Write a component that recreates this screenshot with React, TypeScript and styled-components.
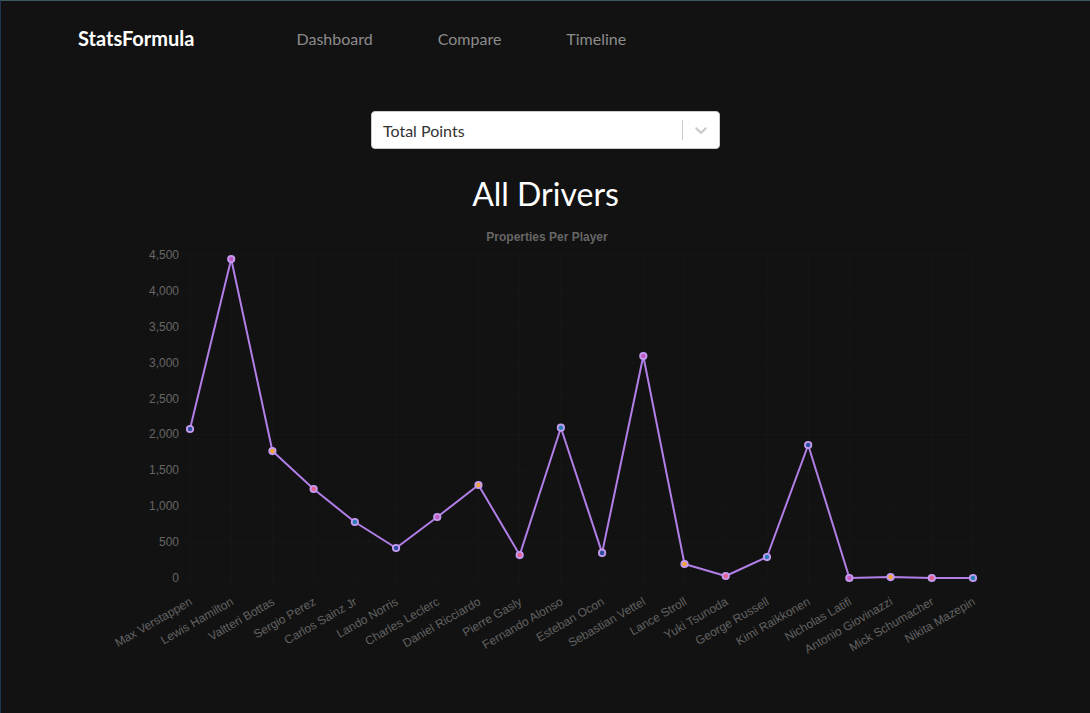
import styled, { createGlobalStyle } from 'styled-components';

type Driver = { name: string; points: number };

const drivers: Driver[] = [
  { name: 'Max Verstappen', points: 2076 },
  { name: 'Lewis Hamilton', points: 4444 },
  { name: 'Valtteri Bottas', points: 1769 },
  { name: 'Sergio Perez', points: 1240 },
  { name: 'Carlos Sainz Jr', points: 780 },
  { name: 'Lando Norris', points: 418 },
  { name: 'Charles Leclerc', points: 850 },
  { name: 'Daniel Ricciardo', points: 1296 },
  { name: 'Pierre Gasly', points: 320 },
  { name: 'Fernando Alonso', points: 2094 },
  { name: 'Esteban Ocon', points: 350 },
  { name: 'Sebastian Vettel', points: 3093 },
  { name: 'Lance Stroll', points: 195 },
  { name: 'Yuki Tsunoda', points: 28 },
  { name: 'George Russell', points: 292 },
  { name: 'Kimi Raikkonen', points: 1853 },
  { name: 'Nicholas Latifi', points: 0 },
  { name: 'Antonio Giovinazzi', points: 13 },
  { name: 'Mick Schumacher', points: 0 },
  { name: 'Nikita Mazepin', points: 0 },
];

const pointColors = ['#2d4f9e', '#c25cc4', '#f2a33a', '#e6618f', '#2a7fb8'];

// chart geometry (svg coords, svg sits at page x=95, y=225)
const LEFT = 94;
const RIGHT = 877;
const TOP = 30;
const BOTTOM = 353;
const MAX = 4500;
const step = (RIGHT - LEFT) / (drivers.length - 1);
const xAt = (i: number) => LEFT + i * step;
const yAt = (v: number) => BOTTOM - (v / MAX) * (BOTTOM - TOP);
const ticks = [0, 500, 1000, 1500, 2000, 2500, 3000, 3500, 4000, 4500];

const GlobalStyle = createGlobalStyle`
  html, body {
    margin: 0;
    padding: 0;
    background: #121212;
  }
  body {
    font-family: "Trebuchet MS", Lato, "DejaVu Sans", sans-serif;
  }
`;

const Page = styled.div`
  min-height: 713px;
  box-sizing: border-box;
  border-top: 1px solid #3d5b5e;
  border-left: 1px solid #1f3550;
  background: #121212;
`;

const Header = styled.header`
  display: flex;
  align-items: center;
  height: 74px;
  padding-left: 77px;
`;

const Brand = styled.h1`
  margin: 0 102px 0 0;
  font-size: 20px;
  font-weight: 700;
  color: #fff;
`;

const Nav = styled.nav`
  display: flex;
  gap: 65px;
`;

const NavItem = styled.a`
  font-size: 16px;
  color: #8c8c8c;
  text-decoration: none;
`;

const Main = styled.main`
  display: flex;
  flex-direction: column;
  align-items: center;
  padding-top: 36px;
`;

const Select = styled.div`
  box-sizing: border-box;
  width: 349px;
  height: 38px;
  display: flex;
  align-items: center;
  background: #fff;
  border: 1px solid #ccc;
  border-radius: 4px;
`;

const SelectValue = styled.span`
  flex: 1;
  padding-left: 11px;
  font-size: 16px;
  color: #333;
`;

const Separator = styled.span`
  align-self: stretch;
  width: 1px;
  margin: 8px 0;
  background: #ccc;
`;

const Indicator = styled.span`
  display: flex;
  padding: 8px;
  color: #ccc;
`;

const Title = styled.h2`
  margin: 26px 0 0;
  font-size: 32px;
  font-weight: 400;
  color: #fff;
  line-height: 38px;
`;

const ChartBox = styled.div`
  width: 900px;
  margin-top: 12px;
`;

const ChartSvg = styled.svg`
  display: block;
  font-family: "Liberation Sans", Arial, sans-serif;
`;

function Chevron() {
  return (
    <svg width="20" height="20" viewBox="0 0 20 20" fill="currentColor">
      <path d="M4.516 7.548c0.436-0.446 1.043-0.481 1.576 0l3.908 3.747 3.908-3.747c0.533-0.481 1.141-0.446 1.574 0 0.436 0.445 0.408 1.197 0 1.615-0.406 0.418-4.695 4.502-4.695 4.502-0.217 0.223-0.502 0.335-0.787 0.335s-0.57-0.112-0.789-0.335c0 0-4.287-4.084-4.695-4.502s-0.436-1.17 0-1.615z" />
    </svg>
  );
}

function LineChart() {
  const line = drivers
    .map((d, i) => `${i === 0 ? 'M' : 'L'}${xAt(i).toFixed(1)},${yAt(d.points).toFixed(1)}`)
    .join(' ');

  return (
    <ChartSvg width={900} height={430}>
      <text x={451} y={16} textAnchor="middle" fontSize={12} fontWeight={700} fill="#666">
        Properties Per Player
      </text>
      {ticks.map((t) => (
        <g key={t}>
          <line x1={LEFT - 6} x2={RIGHT} y1={yAt(t)} y2={yAt(t)} stroke="#171717" strokeWidth={1} />
          <text x={LEFT - 11} y={yAt(t) + 4} textAnchor="end" fontSize={12} fill="#666">
            {t.toLocaleString('en-US')}
          </text>
        </g>
      ))}
      {drivers.map((d, i) => (
        <line key={d.name} x1={xAt(i)} x2={xAt(i)} y1={TOP} y2={BOTTOM + 6} stroke="#171717" strokeWidth={1} />
      ))}
      <path d={line} fill="none" stroke="#b27ee8" strokeWidth={2} strokeLinejoin="round" />
      {drivers.map((d, i) => (
        <circle
          key={d.name}
          cx={xAt(i)}
          cy={yAt(d.points)}
          r={3.2}
          fill={pointColors[i % pointColors.length]}
          stroke="#c39bf0"
          strokeWidth={1.8}
        />
      ))}
      {drivers.map((d, i) => {
        const ax = xAt(i) + 3;
        const ay = 379;
        return (
          <text
            key={d.name}
            x={ax}
            y={ay}
            textAnchor="end"
            fontSize={12}
            fill="#626262"
            transform={`rotate(-30 ${ax} ${ay})`}
          >
            {d.name}
          </text>
        );
      })}
    </ChartSvg>
  );
}

export default function App() {
  return (
    <>
      <GlobalStyle />
      <Page>
        <Header>
          <Brand>StatsFormula</Brand>
          <Nav>
            <NavItem>Dashboard</NavItem>
            <NavItem>Compare</NavItem>
            <NavItem>Timeline</NavItem>
          </Nav>
        </Header>
        <Main>
          <Select>
            <SelectValue>Total Points</SelectValue>
            <Separator />
            <Indicator>
              <Chevron />
            </Indicator>
          </Select>
          <Title>All Drivers</Title>
          <ChartBox>
            <LineChart />
          </ChartBox>
        </Main>
      </Page>
    </>
  );
}
